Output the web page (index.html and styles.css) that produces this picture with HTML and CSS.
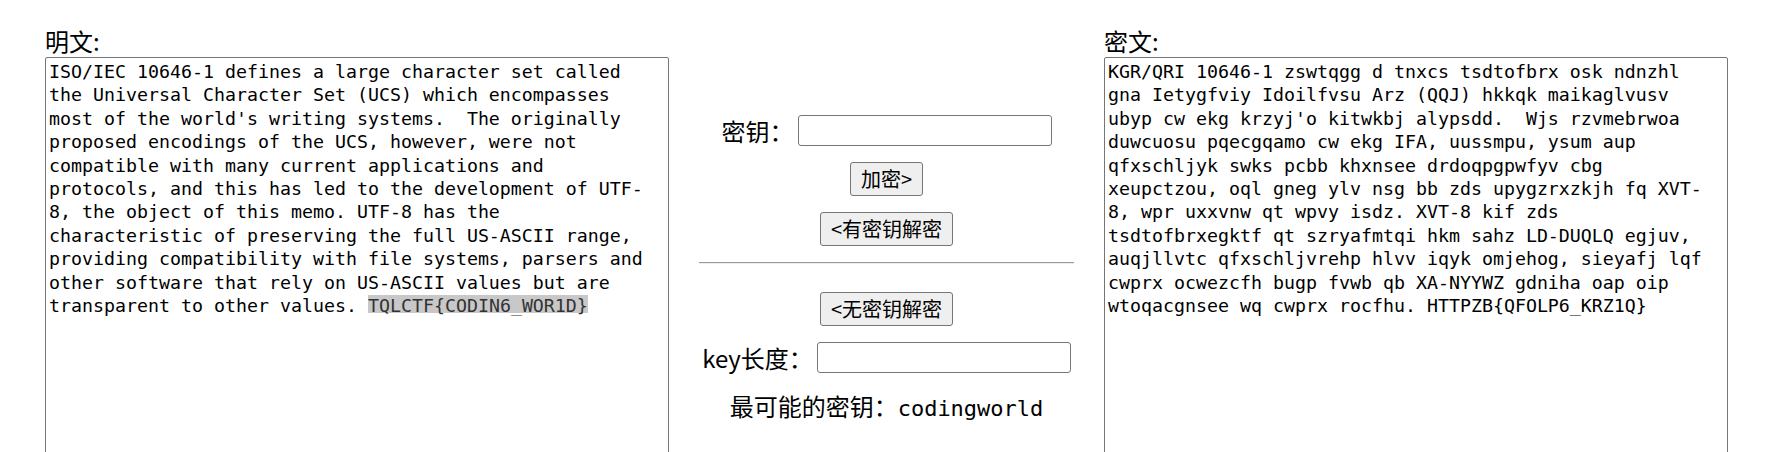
FILE: index.html
```html
<!DOCTYPE html>
<html lang="zh-CN">
<head>
<meta charset="utf-8">
<title>维吉尼亚密码</title>
<link rel="stylesheet" href="styles.css">
</head>
<body>
<div class="page">
  <div class="col">
    <div class="title">明文:</div>
    <div class="box" role="textbox">ISO/IEC 10646-1 defines a large character set called
the Universal Character Set (UCS) which encompasses
most of the world's writing systems.  The originally
proposed encodings of the UCS, however, were not
compatible with many current applications and
protocols, and this has led to the development of UTF-
8, the object of this memo. UTF-8 has the
characteristic of preserving the full US-ASCII range,
providing compatibility with file systems, parsers and
other software that rely on US-ASCII values but are
transparent to other values. <span class="sel">TQLCTF{CODIN6_WOR1D}</span></div>
  </div>
  <div class="mid">
    <div class="row row-key">
      <span class="lbl">密钥：</span>
      <input class="field" type="text">
    </div>
    <button class="btn btn-enc">加密&gt;</button>
    <button class="btn btn-dec">&lt;有密钥解密</button>
    <hr class="sep">
    <button class="btn btn-crack">&lt;无密钥解密</button>
    <div class="row row-len">
      <span class="lbl">key长度：</span>
      <input class="field" type="text">
    </div>
    <div class="result">最可能的密钥：<span class="mono">codingworld</span></div>
  </div>
  <div class="col">
    <div class="title">密文:</div>
    <div class="box" role="textbox">KGR/QRI 10646-1 zswtqgg d tnxcs tsdtofbrx osk ndnzhl
gna Ietygfviy Idoilfvsu Arz (QQJ) hkkqk maikaglvusv
ubyp cw ekg krzyj'o kitwkbj alypsdd.  Wjs rzvmebrwoa
duwcuosu pqecgqamo cw ekg IFA, uussmpu, ysum aup
qfxschljyk swks pcbb khxnsee drdoqpgpwfyv cbg
xeupctzou, oql gneg ylv nsg bb zds upygzrxzkjh fq XVT-
8, wpr uxxvnw qt wpvy isdz. XVT-8 kif zds
tsdtofbrxegktf qt szryafmtqi hkm sahz LD-DUQLQ egjuv,
auqjllvtc qfxschljvrehp hlvv iqyk omjehog, sieyafj lqf
cwprx ocwezcfh bugp fvwb qb XA-NYYWZ gdniha oap oip
wtoqacgnsee wq cwprx rocfhu. HTTPZB{QFOLP6_KRZ1Q}</div>
  </div>
</div>
</body>
</html>
```

FILE: styles.css
```css
html, body {
  margin: 0;
  padding: 0;
  background: #ffffff;
}

body {
  font-family: "Noto Sans CJK SC", "Noto Sans", sans-serif;
  color: #000;
  overflow: hidden;
}

.page {
  display: flex;
  align-items: flex-start;
  padding-left: 45px;
  padding-top: 24px;
}

.col {
  width: 624px;
  display: flex;
  flex-direction: column;
}

.title {
  font-size: 24px;
  line-height: 33px;
  height: 33px;
}

.box {
  box-sizing: border-box;
  width: 624px;
  height: 420px;
  border: 1px solid #767676;
  border-radius: 2px;
  padding: 2px 3px;
  font-family: "DejaVu Sans Mono", "Liberation Mono", monospace;
  font-size: 18.27px;
  line-height: 23.4px;
  white-space: pre;
  overflow: hidden;
  color: #000;
}

.sel {
  background: linear-gradient(#c8c8c8 0, #c8c8c8 18px, transparent 18px);
  color: #333;
}

.mid {
  width: 435px;
  display: flex;
  flex-direction: column;
  align-items: center;
  padding-top: 91px;
}

.row {
  display: flex;
  align-items: center;
  gap: 4px;
  height: 31px;
}

.lbl {
  font-size: 24px;
  line-height: 31px;
}

.field {
  box-sizing: border-box;
  width: 254px;
  height: 31px;
  margin: 0;
  border: 1px solid #767676;
  border-radius: 3px;
  background: #fff;
  padding: 1px 2px;
}

.btn {
  box-sizing: border-box;
  height: 34px;
  margin: 0;
  padding: 0 10px;
  font-family: "Noto Sans CJK SC", "Noto Sans", sans-serif;
  font-size: 20px;
  line-height: 30px;
  color: #000;
  background: #efefef;
  border: 1px solid #767676;
  border-radius: 3px;
}

.btn-enc {
  margin-top: 16px;
}

.btn-dec {
  margin-top: 16px;
}

.sep {
  width: 375px;
  margin: 16px 0 0 0;
  border: 0;
  border-top: 1px solid #9a9a9a;
  border-bottom: 1px solid #eeeeee;
  height: 0;
}

.btn-crack {
  margin-top: 28px;
}

.row-len {
  margin-top: 16px;
}

.result {
  margin-top: 16px;
  font-size: 24px;
  line-height: 34px;
}

.mono {
  font-family: "DejaVu Sans Mono", "Liberation Mono", monospace;
  font-size: 22px;
}
```
